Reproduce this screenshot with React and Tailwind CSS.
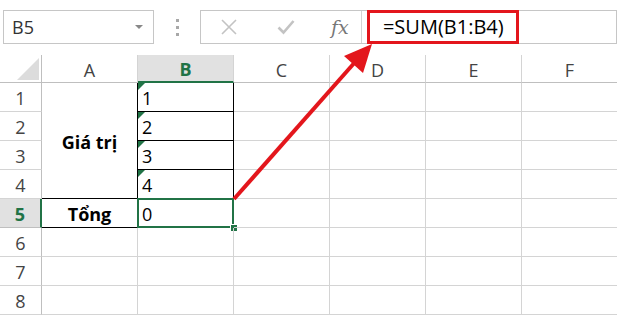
import React from "react";

const cols = ["A", "B", "C", "D", "E", "F"];

function Tri() {
  return (
    <span className="absolute left-0 top-0 h-0 w-0 border-t-[7px] border-r-[7px] border-t-[#217346] border-r-transparent" />
  );
}

function RowHead({ n, active }) {
  return (
    <div
      className={
        active
          ? "flex items-center justify-center border-b border-r-2 border-b-[#bfbfbf] border-r-[#217346] bg-[#e1e1e1] pt-[2px] text-[18px] font-bold text-[#217346]"
          : "flex items-center justify-center border-b border-r border-b-[#d4d4d4] border-r-[#bfbfbf] pt-[2px] text-[18px] text-[#444]"
      }
    >
      {n}
    </div>
  );
}

function Cell({ children, className = "" }) {
  return (
    <div className={"relative border-b border-r border-[#d4d4d4] " + className}>
      {children}
    </div>
  );
}

function BCell({ v }) {
  return (
    <div className="relative border-b border-r border-black pl-[4px] pt-[1px] text-[18px] leading-[28px] text-black">
      <Tri />
      {v}
    </div>
  );
}

export default function App() {
  return (
    <div className="relative h-[315px] w-[617px] overflow-hidden bg-white font-['Open_Sans',sans-serif]">
      {/* top bar */}
      <div className="flex h-[55px] items-start pl-[3px] pt-[10px]">
        <div className="flex h-[34px] w-[155px] items-center justify-between border border-[#c6c6c6] pl-[8px] pr-[10px]">
          <span className="text-[18px] text-[#333]">B5</span>
          <span className="h-0 w-0 border-l-[4px] border-r-[4px] border-t-[4px] border-l-transparent border-r-transparent border-t-[#888]" />
        </div>
        <div className="ml-[22px] mt-[9px] flex flex-col gap-[4px]">
          <span className="h-[3px] w-[3px] bg-[#a8a8a8]" />
          <span className="h-[3px] w-[3px] bg-[#a8a8a8]" />
          <span className="h-[3px] w-[3px] bg-[#a8a8a8]" />
        </div>
        <div className="relative ml-[21px] flex h-[34px] w-[430px] items-center border border-[#c6c6c6]">
          <svg className="ml-[20px]" width="16" height="16" viewBox="0 0 16 16">
            <path d="M1 1 L15 15 M15 1 L1 15" stroke="#c3c3c3" strokeWidth="1.6" fill="none" />
          </svg>
          <svg className="ml-[40px]" width="18" height="16" viewBox="0 0 18 16">
            <path d="M1.5 8.5 L6.5 13.5 L16.5 2" stroke="#c3c3c3" strokeWidth="2.6" fill="none" />
          </svg>
          <span className="ml-[36px] font-['DejaVu_Serif',serif] text-[19px] italic leading-none text-[#777]">
            fx
          </span>
          <span className="ml-[12px] h-full w-px bg-[#d4d4d4]" />
          <div className="absolute left-[166px] top-[-1px] flex h-[34px] w-[152px] items-center border-[3px] border-[#e3161c] pl-[13px] text-[20px] text-black">
            =SUM(B1:B4)
          </div>
        </div>
      </div>

      {/* grid */}
      <div className="grid grid-cols-[42px_repeat(6,96px)] grid-rows-[28px_repeat(8,29px)]">
        <div className="relative border-b border-r border-[#bfbfbf]">
          <svg className="absolute left-[17px] top-[3px]" width="22" height="22" viewBox="0 0 22 22">
            <polygon points="22,0 22,22 0,22" fill="#dcdcdc" />
          </svg>
        </div>
        {cols.map((c) =>
          c === "B" ? (
            <div
              key={c}
              className="flex items-center justify-center border-b-2 border-r border-b-[#217346] border-r-[#d4d4d4] bg-[#e1e1e1] pt-[3px] text-[18px] font-bold text-[#217346]"
            >
              {c}
            </div>
          ) : (
            <div
              key={c}
              className="flex items-center justify-center border-b border-r border-b-[#bfbfbf] border-r-[#d4d4d4] pt-[3px] text-[18px] text-[#444]"
            >
              {c}
            </div>
          )
        )}

        {/* row 1 */}
        <RowHead n={1} />
        <div className="row-span-4 flex items-center justify-center border-b border-r border-black pt-[4px] text-[18px] font-bold text-black">
          Giá trị
        </div>
        <BCell v="1" />
        <Cell />
        <Cell />
        <Cell />
        <Cell />

        {[2, 3, 4].map((n) => (
          <React.Fragment key={n}>
            <RowHead n={n} />
            <BCell v={String(n)} />
            <Cell />
            <Cell />
            <Cell />
            <Cell />
          </React.Fragment>
        ))}

        {/* row 5 */}
        <RowHead n={5} active />
        <div className="flex items-center justify-center border-b border-r border-black pt-[2px] text-[18px] font-bold text-black">
          Tổng
        </div>
        <div className="relative border-b border-r border-[#d4d4d4] pl-[4px] pt-[1px] text-[18px] leading-[28px] text-black">
          0
          <span className="pointer-events-none absolute -left-px -top-px bottom-[-1px] right-[-1px] border-2 border-[#217346]" />
          <span className="absolute bottom-[-5px] right-[-5px] h-[8px] w-[8px] border border-white bg-[#217346]" />
        </div>
        <Cell />
        <Cell />
        <Cell />
        <Cell />

        {[6, 7, 8].map((n) => (
          <React.Fragment key={n}>
            <RowHead n={n} />
            <Cell />
            <Cell />
            <Cell />
            <Cell />
            <Cell />
            <Cell />
          </React.Fragment>
        ))}
      </div>

      {/* annotation arrow */}
      <svg className="pointer-events-none absolute left-0 top-0" width="617" height="315" viewBox="0 0 617 315">
        <line x1="234" y1="199" x2="356" y2="61" stroke="#e3161c" strokeWidth="4" />
        <polygon points="372,44 344,56 363,73" fill="#e3161c" />
      </svg>
    </div>
  );
}
